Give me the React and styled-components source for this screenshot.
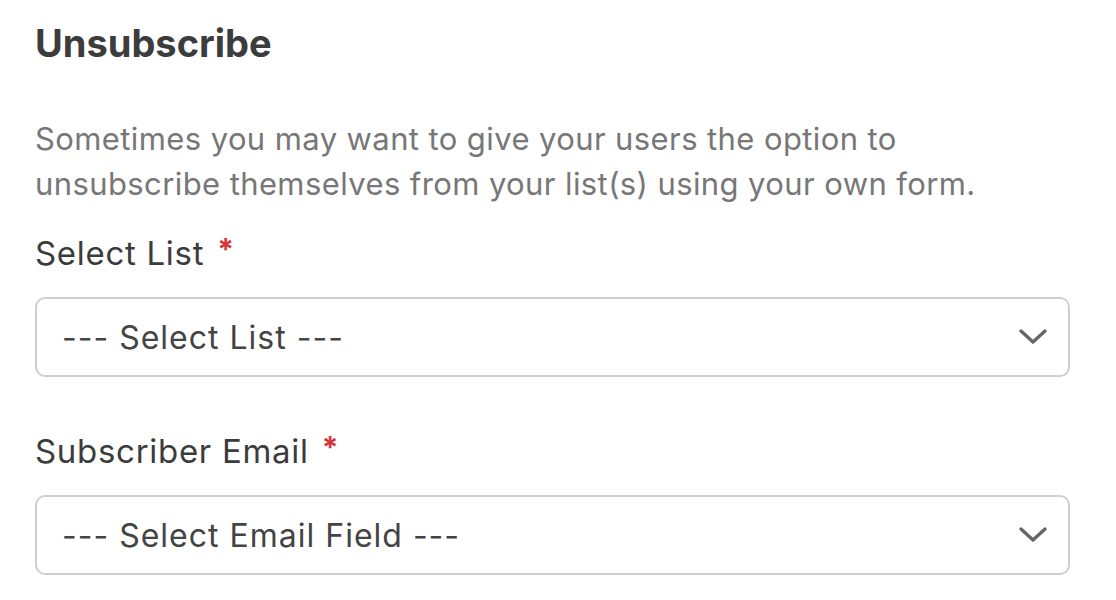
import React from "react";
import styled, { createGlobalStyle } from "styled-components";

const Global = createGlobalStyle`
  body {
    margin: 0;
    background: #fff;
    font-family: Inter, "Liberation Sans", Arial, sans-serif;
  }
`;

const Panel = styled.div`
  padding: 20px 46px 0 35px;
  display: flex;
  flex-direction: column;
`;

const Title = styled.h2`
  margin: 0;
  font-size: 38px;
  line-height: 46px;
  font-weight: 700;
  color: #3c3c3c;
`;

const Intro = styled.p`
  margin: 50px 0 0;
  font-size: 31px;
  line-height: 45px;
  letter-spacing: 0.4px;
  color: #777;
`;

const Field = styled.div`
  display: flex;
  flex-direction: column;
  margin-top: ${(p) => p.$gap}px;
`;

const Label = styled.label`
  font-size: 33px;
  line-height: 40px;
  letter-spacing: 0.7px;
  color: #3c3c3c;
`;

const Required = styled.span`
  color: #d63638;
  font-weight: 700;
  font-size: 30px;
  line-height: 0;
  margin-left: 13px;
  vertical-align: 5px;
`;

const SelectBox = styled.div`
  margin-top: 24px;
  height: 80px;
  box-sizing: border-box;
  border: 2px solid #cfcfcf;
  border-radius: 10px;
  display: flex;
  align-items: center;
  justify-content: space-between;
  padding: 0 20px 0 25px;
  font-size: 32px;
  letter-spacing: 1px;
  color: #444;
`;

const Chevron = () => (
  <svg width="30" height="18" viewBox="0 0 30 18" fill="none">
    <path d="M3 3 L15 14 L27 3" stroke="#666" strokeWidth="3.4" strokeLinecap="round" strokeLinejoin="round" />
  </svg>
);

function Select({ placeholder }) {
  return (
    <SelectBox>
      <span>{placeholder}</span>
      <Chevron />
    </SelectBox>
  );
}

export default function App() {
  return (
    <>
      <Global />
      <Panel>
        <Title>Unsubscribe</Title>
        <Intro>
          Sometimes you may want to give your users the option to
          <br />
          unsubscribe themselves from your list(s) using your own form.
        </Intro>
        <Field $gap={27}>
          <Label>
            Select List<Required>*</Required>
          </Label>
          <Select placeholder="--- Select List ---" />
        </Field>
        <Field $gap={54}>
          <Label>
            Subscriber Email<Required>*</Required>
          </Label>
          <Select placeholder="--- Select Email Field ---" />
        </Field>
      </Panel>
    </>
  );
}
